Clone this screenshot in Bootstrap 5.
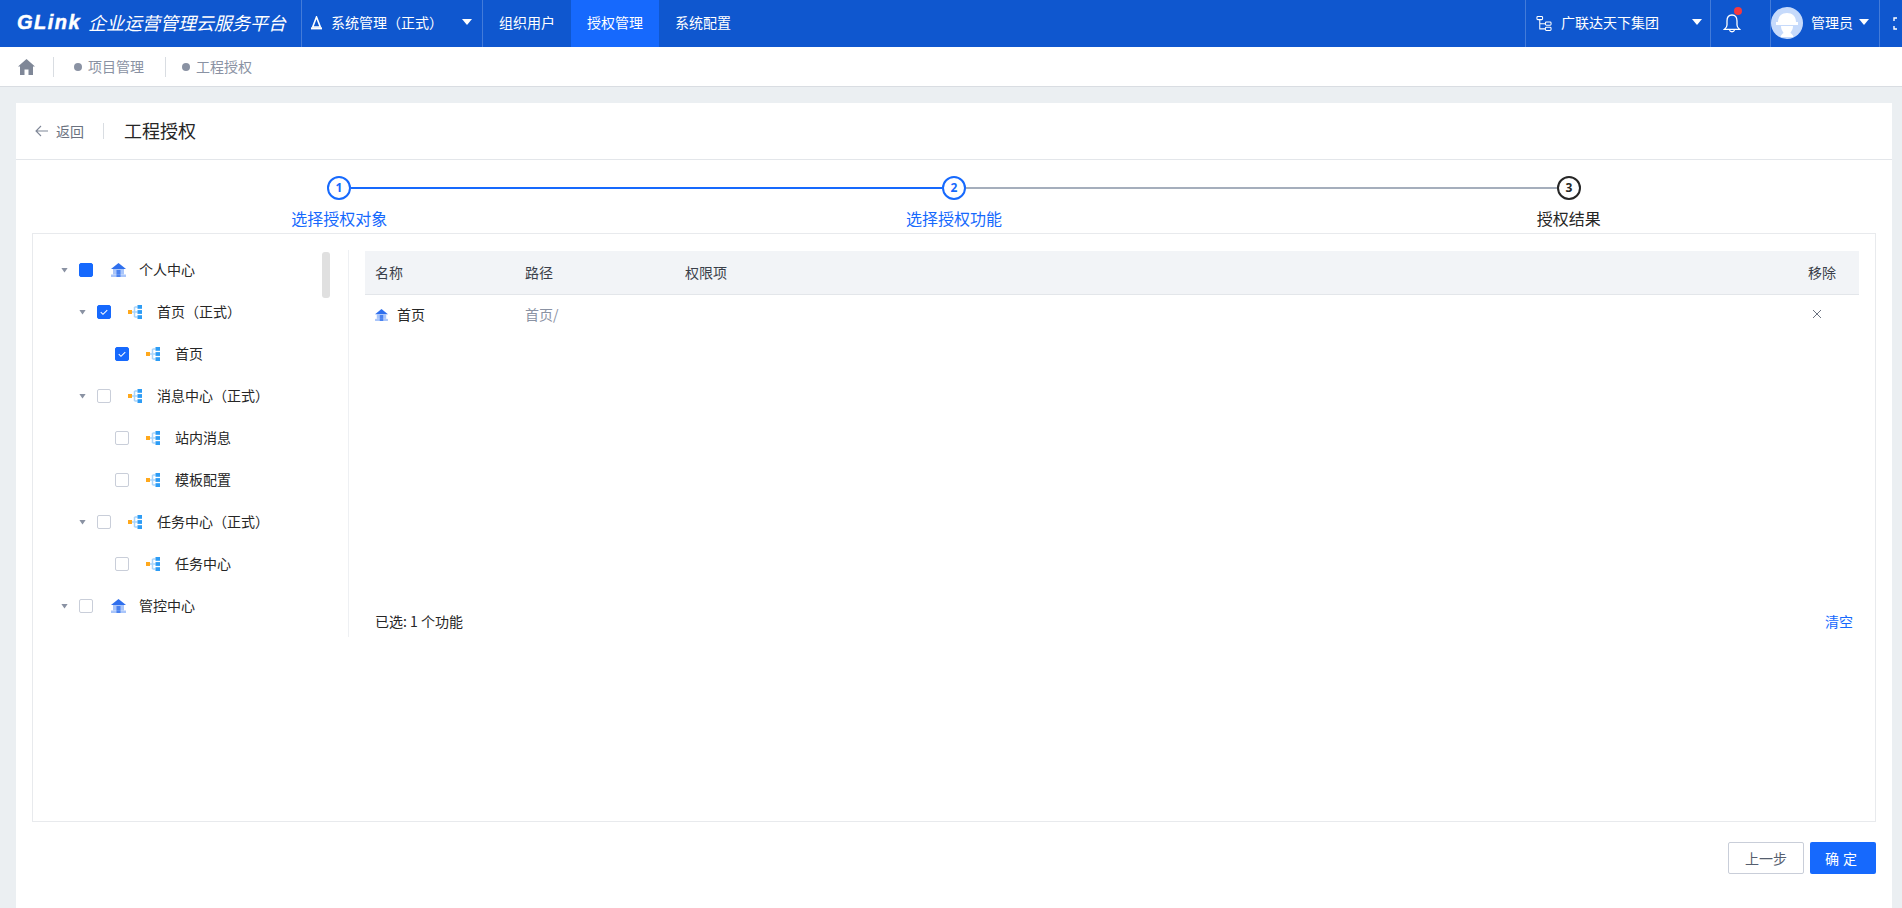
<!DOCTYPE html>
<html lang="zh-CN">
<head>
<meta charset="UTF-8">
<title>工程授权</title>
<link href="https://cdn.jsdelivr.net/npm/bootstrap@5.3.3/dist/css/bootstrap.min.css" rel="stylesheet">
<style>
html, body { height: 100%; }
body { font-family: "Noto Sans CJK SC", "Liberation Sans", sans-serif; font-size: 14px; line-height: 20px; color: #262626; background: #ebeff2; overflow: hidden; }

/* 顶部导航 */
.top-bar { height: 47px; background: #0f57cf; color: #fff; }
.top-cell { display: flex; align-items: center; border-right: 1px solid rgba(255,255,255,.22); padding-bottom: 1px; }
.top-cell > span { padding-bottom: 2px; }
.brand-cell { width: 302px; padding-left: 17px; }
.brand-en { font-family: "Liberation Sans", sans-serif; font-weight: 700; font-style: italic; font-size: 20px; letter-spacing: 1.5px; -webkit-text-stroke: .5px #fff; line-height: 45px; width: 71px; }
.brand-zh { font-size: 18px; font-style: italic; white-space: nowrap; }
.sys-cell { width: 181px; padding-left: 8px; }
.sys-cell svg { margin-right: 8px; }
.sys-tri { margin-right: 10px; }
.tri-white { width: 0; height: 0; border-left: 5px solid transparent; border-right: 5px solid transparent; border-top: 6px solid #fff; }
.top-link { color: #fff; text-decoration: none; padding: 0 16px; line-height: 45px; }
.top-link:hover { color: #fff; }
.top-link.on { background: #1669fd; }
.org-cell { width: 186px; border-left: 1px solid rgba(255,255,255,.22); padding-left: 10px; }
.org-name { margin-left: 9px; }
.bell-cell { width: 60px; padding-left: 12px; position: relative; }
.bell-dot { position: absolute; left: 23px; top: 7px; width: 8px; height: 8px; border-radius: 50%; background: #f5393f; padding: 0 !important; }
.user-cell { width: 109px; }
.user-tri { margin-left: 6px; }
.full-cell { width: 22px; padding-left: 13px; flex: none; }

/* 面包屑 */
.crumb-bar { height: 40px; background: #fff; border-bottom: 1px solid #d9dde2; color: #8a92a3; }
.crumb-home { width: 54px; padding-left: 18px; height: 20px; border-right: 1px solid #d9dde2; }
.crumb-item { padding: 0 21px 0 20px; height: 20px; border-right: 1px solid #d9dde2; display: flex; align-items: center; }
.crumb-item + .crumb-item { padding-left: 16px; }
.crumb-item:last-child { border-right: 0; }
.crumb-item span:last-child { padding-bottom: 2px; }
.crumb-dot { width: 8px; height: 8px; border-radius: 50%; background: #8a92a3; margin-right: 6px; }

/* 主体 */
.page-wrap { padding: 16px 10px 0 16px; flex: 1; min-height: 0; }
.main-panel { background: #fff; height: 100%; }
.panel-head { height: 57px; border-bottom: 1px solid #e3e6ea; padding-left: 19px; }
.back-link { color: #6b7280; display: flex; align-items: center; width: 69px; height: 16px; border-right: 1px solid #d9dde2; }
.back-link svg { margin-right: 8px; }
.panel-title { font-size: 18px; margin-left: 20px; padding-bottom: 2px; color: #262626; }

/* 步骤条 */
.step-line-row { padding: 16px 311px 0; }
.step-num { width: 24px; height: 24px; flex: none; border-radius: 50%; border: 2px solid #1669fd; color: #1669fd; font-family: "Noto Sans", sans-serif; font-weight: 700; font-size: 12px; line-height: 19px; text-align: center; }
.step-num.todo { border-color: #262626; color: #262626; }
.step-link { flex: 1; height: 2px; background: #1669fd; }
.step-link.todo { background: #a5aebc; }
.step-text-row { margin: 6px 16px 0; display: grid; grid-template-columns: repeat(3, 1fr); text-align: center; font-size: 16px; line-height: 24px; color: #1669fd; }
.step-text-row .now { color: #262626; }

.auth-box { margin: 3px 16px 0; height: 589px; border: 1px solid #e8eaed; padding-top: 16px; }
.tree-pane { width: 316px; height: 387px; flex: none; border-right: 1px solid #eef0f3; position: relative; }
.tree-thumb { position: absolute; left: 289px; top: 2px; width: 8px; height: 46px; border-radius: 3px; background: #e0e0e0; }
.tree-row { height: 40px; margin-bottom: 2px; display: flex; align-items: center; }
.tree-row > span:last-child { padding-bottom: 2px; }
.lv1 { padding-left: 28px; }
.lv2 { padding-left: 46px; }
.lv3 { padding-left: 64px; }
.tree-tri { width: 7px; height: 5px; flex: none; background: #8a92a3; clip-path: polygon(0 0, 100% 0, 50% 100%); margin-right: 11px; }
.tree-gap { width: 18px; flex: none; }
.tree-check.form-check-input { width: 14px; height: 14px; flex: none; margin: 0 18px 0 0; border-color: #c9ced9; border-radius: 2px; }
.tree-check.form-check-input:checked { background-color: #1669fd; border-color: #1669fd; background-image: url("data:image/svg+xml,%3csvg xmlns='http://www.w3.org/2000/svg' viewBox='0 0 14 14'%3e%3cpath fill='none' stroke='%23fff' stroke-width='1.2' d='M3.2 7.2l2.6 2.5 5-5'/%3e%3c/svg%3e"); background-size: 100% 100%; }
.tree-check.part { background-color: #1669fd; border-color: #1669fd; }
.ico-mod { flex: none; width: 14px; height: 14px; margin: 0 15px 0 -1px; }
.ico-home { flex: none; width: 15px; height: 14px; margin-right: 13px; }

.list-pane { margin: 1px 16px 0; height: 386px; flex: 1; min-width: 0; }
.auth-table { table-layout: fixed; margin: 0; }
.auth-table th { height: 43px; background: #f2f4f7; border-bottom: 1px solid #e3e6ea; font-weight: 400; color: #3a3f4a; padding: 0 0 0 10px; vertical-align: middle; }
.auth-table td { height: 42px; border: 0; padding: 0 0 2px 10px; vertical-align: middle; color: #262626; }
.auth-table .path-cell { color: #8a92a3; }
.name-icon { margin-right: 9px; vertical-align: -1px; }
.del-icon { margin-left: 4px; vertical-align: 1px; }
.sum-row { height: 30px; padding: 0 6px 2px 10px; }
.clear-link { color: #1669fd; text-decoration: none; }

.foot-row { padding: 20px 16px 0 0; }
.btn-prev, .btn-ok { height: 32px; border-radius: 2px; font-size: 14px; line-height: 20px; padding: 0; }
.btn-prev { width: 76px; border: 1px solid #c9ced9; color: #555e6e; background: #fff; }
.btn-ok { width: 66px; border: 0; color: #fff; background: #1669fd; margin-left: 6px; letter-spacing: 4px; }
.btn-ok:hover { background: #1669fd; color: #fff; }
</style>
</head>
<body class="d-flex flex-column">

<svg width="0" height="0" class="d-none">
  <symbol id="sym-mod" viewBox="0 0 14 14">
    <path d="M4 7H9.5M6.5 2V12M6.5 2H9.5M6.5 12H9.5" stroke="#a9d4fa" stroke-width="1.5" fill="none"/>
    <rect x="0" y="5" width="4" height="4" fill="#ffa81c"/>
    <rect x="9.5" y="0" width="4.5" height="3.8" fill="#2d9cf5"/>
    <rect x="9.5" y="5.1" width="4.5" height="3.8" fill="#2d9cf5"/>
    <rect x="9.5" y="10.2" width="4.5" height="3.8" fill="#2d9cf5"/>
  </symbol>
  <symbol id="sym-house" viewBox="0 0 15 14">
    <path d="M7.5 0L15 6H0Z" fill="#2f6fed"/>
    <rect x="2" y="6" width="11" height="5.5" fill="#a9c5fa"/>
    <rect x="5.5" y="7" width="4" height="5" fill="#4a82ef"/>
    <rect x="0" y="11.5" width="15" height="2.5" fill="#a9c5fa"/>
    <rect x="5.5" y="11.5" width="4" height="2.5" fill="#4a82ef"/>
  </symbol>
</svg>

<header class="top-bar d-flex flex-shrink-0">
  <div class="top-cell brand-cell"><span class="brand-en">GLink</span><span class="brand-zh">企业运营管理云服务平台</span></div>
  <div class="top-cell sys-cell">
    <svg width="13" height="14" viewBox="0 0 13 14"><path d="M6.5 1L10.3 11H2.7Z" fill="none" stroke="#fff" stroke-width="1.6"/><rect x="1" y="11.4" width="11" height="2" fill="#fff"/></svg>
    <span>系统管理（正式）</span><span class="tri-white sys-tri ms-auto"></span>
  </div>
  <nav class="d-flex">
    <a class="top-link" href="#">组织用户</a>
    <a class="top-link on" href="#">授权管理</a>
    <a class="top-link" href="#">系统配置</a>
  </nav>
  <div class="top-cell org-cell ms-auto">
    <svg width="16" height="17" viewBox="0 0 17 17" fill="none" stroke="#fff" stroke-width="1.1"><rect x="1" y="1" width="6" height="3.4" rx="1"/><rect x="10" y="7" width="6" height="3.4" rx="1"/><rect x="10" y="12.5" width="6" height="3.4" rx="1"/><path d="M4 4.4V14.2H10M4 8.7H10"/></svg>
    <span class="org-name">广联达天下集团</span><span class="tri-white ms-auto me-2"></span>
  </div>
  <div class="top-cell bell-cell">
    <svg width="18" height="21" viewBox="0 0 18 21" fill="none" stroke="#fff" stroke-width="1.3"><path d="M9 2C5.6 2 4 4.6 4 8V12C4 14 2.8 15.2 1.5 16.3H16.5C15.2 15.2 14 14 14 12V8C14 4.6 12.4 2 9 2Z"/><path d="M6.6 17C7 19.3 11 19.3 11.4 17"/></svg>
    <span class="bell-dot"></span>
  </div>
  <div class="top-cell user-cell">
    <svg width="32" height="32" viewBox="0 0 32 32"><circle cx="16" cy="16" r="16" fill="#c6dafb"/><path d="M7 15C7 9 11 6 16 6S25 9 25 15H27V18H5V15Z" fill="#fff"/><path d="M10 19H22C22 23 20 24 19.5 26C21 27 22 28 22.5 30H9.5C10 28 11 27 12.5 26C12 24 10 23 10 19Z" fill="#fff"/></svg>
    <span class="ms-2">管理员</span><span class="tri-white user-tri"></span>
  </div>
  <div class="top-cell full-cell border-0">
    <svg width="5" height="13" viewBox="0 0 5 13" fill="none" stroke="#fff" stroke-width="1.4"><path d="M4 1H1V4M1 9V12H4"/></svg>
  </div>
</header>

<div class="crumb-bar d-flex align-items-center flex-shrink-0">
  <div class="crumb-home d-flex align-items-center">
    <svg width="17" height="16" viewBox="0 0 17 16"><path d="M8.5 0L17 7.5H15V16H10.5V10.5H6.5V16H2V7.5H0Z" fill="#7f8797"/></svg>
  </div>
  <div class="crumb-item"><span class="crumb-dot"></span><span>项目管理</span></div>
  <div class="crumb-item"><span class="crumb-dot"></span><span>工程授权</span></div>
</div>

<div class="page-wrap">
  <div class="main-panel d-flex flex-column">
    <div class="panel-head d-flex align-items-center flex-shrink-0">
      <div class="back-link">
        <svg width="13" height="12" viewBox="0 0 13 12" fill="none" stroke="#7f8797" stroke-width="1.1"><path d="M6 1L1 6L6 11M1 6H13"/></svg>
        <span>返回</span>
      </div>
      <div class="panel-title">工程授权</div>
    </div>

    <div class="step-line-row d-flex align-items-center">
      <div class="step-num">1</div>
      <div class="step-link"></div>
      <div class="step-num">2</div>
      <div class="step-link todo"></div>
      <div class="step-num todo">3</div>
    </div>
    <div class="step-text-row">
      <div>选择授权对象</div>
      <div>选择授权功能</div>
      <div class="now">授权结果</div>
    </div>

    <div class="auth-box d-flex align-items-start">
      <div class="tree-pane">
        <span class="tree-thumb"></span>
        <div class="tree-row lv1"><span class="tree-tri"></span><input class="form-check-input tree-check part" type="checkbox" aria-label="个人中心"><svg class="ico-home"><use href="#sym-house"/></svg><span>个人中心</span></div>
        <div class="tree-row lv2"><span class="tree-tri"></span><input class="form-check-input tree-check" type="checkbox" checked aria-label="首页（正式）"><svg class="ico-mod"><use href="#sym-mod"/></svg><span>首页（正式）</span></div>
        <div class="tree-row lv3"><span class="tree-gap"></span><input class="form-check-input tree-check" type="checkbox" checked aria-label="首页"><svg class="ico-mod"><use href="#sym-mod"/></svg><span>首页</span></div>
        <div class="tree-row lv2"><span class="tree-tri"></span><input class="form-check-input tree-check" type="checkbox" aria-label="消息中心（正式）"><svg class="ico-mod"><use href="#sym-mod"/></svg><span>消息中心（正式）</span></div>
        <div class="tree-row lv3"><span class="tree-gap"></span><input class="form-check-input tree-check" type="checkbox" aria-label="站内消息"><svg class="ico-mod"><use href="#sym-mod"/></svg><span>站内消息</span></div>
        <div class="tree-row lv3"><span class="tree-gap"></span><input class="form-check-input tree-check" type="checkbox" aria-label="模板配置"><svg class="ico-mod"><use href="#sym-mod"/></svg><span>模板配置</span></div>
        <div class="tree-row lv2"><span class="tree-tri"></span><input class="form-check-input tree-check" type="checkbox" aria-label="任务中心（正式）"><svg class="ico-mod"><use href="#sym-mod"/></svg><span>任务中心（正式）</span></div>
        <div class="tree-row lv3"><span class="tree-gap"></span><input class="form-check-input tree-check" type="checkbox" aria-label="任务中心"><svg class="ico-mod"><use href="#sym-mod"/></svg><span>任务中心</span></div>
        <div class="tree-row lv1"><span class="tree-tri"></span><input class="form-check-input tree-check" type="checkbox" aria-label="管控中心"><svg class="ico-home"><use href="#sym-house"/></svg><span>管控中心</span></div>
      </div>

      <div class="list-pane d-flex flex-column">
        <table class="table auth-table">
          <colgroup><col style="width:150px"><col style="width:160px"><col><col style="width:61px"></colgroup>
          <thead><tr><th>名称</th><th>路径</th><th>权限项</th><th>移除</th></tr></thead>
          <tbody>
            <tr>
              <td><svg class="name-icon" width="13" height="12"><use href="#sym-house"/></svg>首页</td>
              <td class="path-cell">首页/</td>
              <td></td>
              <td><svg class="del-icon" width="10" height="10" viewBox="0 0 10 10" stroke="#6b7280" stroke-width="1"><path d="M1 1L9 9M9 1L1 9"/></svg></td>
            </tr>
          </tbody>
        </table>
        <div class="sum-row d-flex align-items-center justify-content-between mt-auto">
          <span>已选: 1 个功能</span>
          <a class="clear-link" href="#">清空</a>
        </div>
      </div>
    </div>

    <div class="foot-row d-flex justify-content-end">
      <button type="button" class="btn btn-prev">上一步</button>
      <button type="button" class="btn btn-ok">确定</button>
    </div>
  </div>
</div>

<script src="https://cdn.jsdelivr.net/npm/bootstrap@5.3.3/dist/js/bootstrap.bundle.min.js"></script>
</body>
</html>
